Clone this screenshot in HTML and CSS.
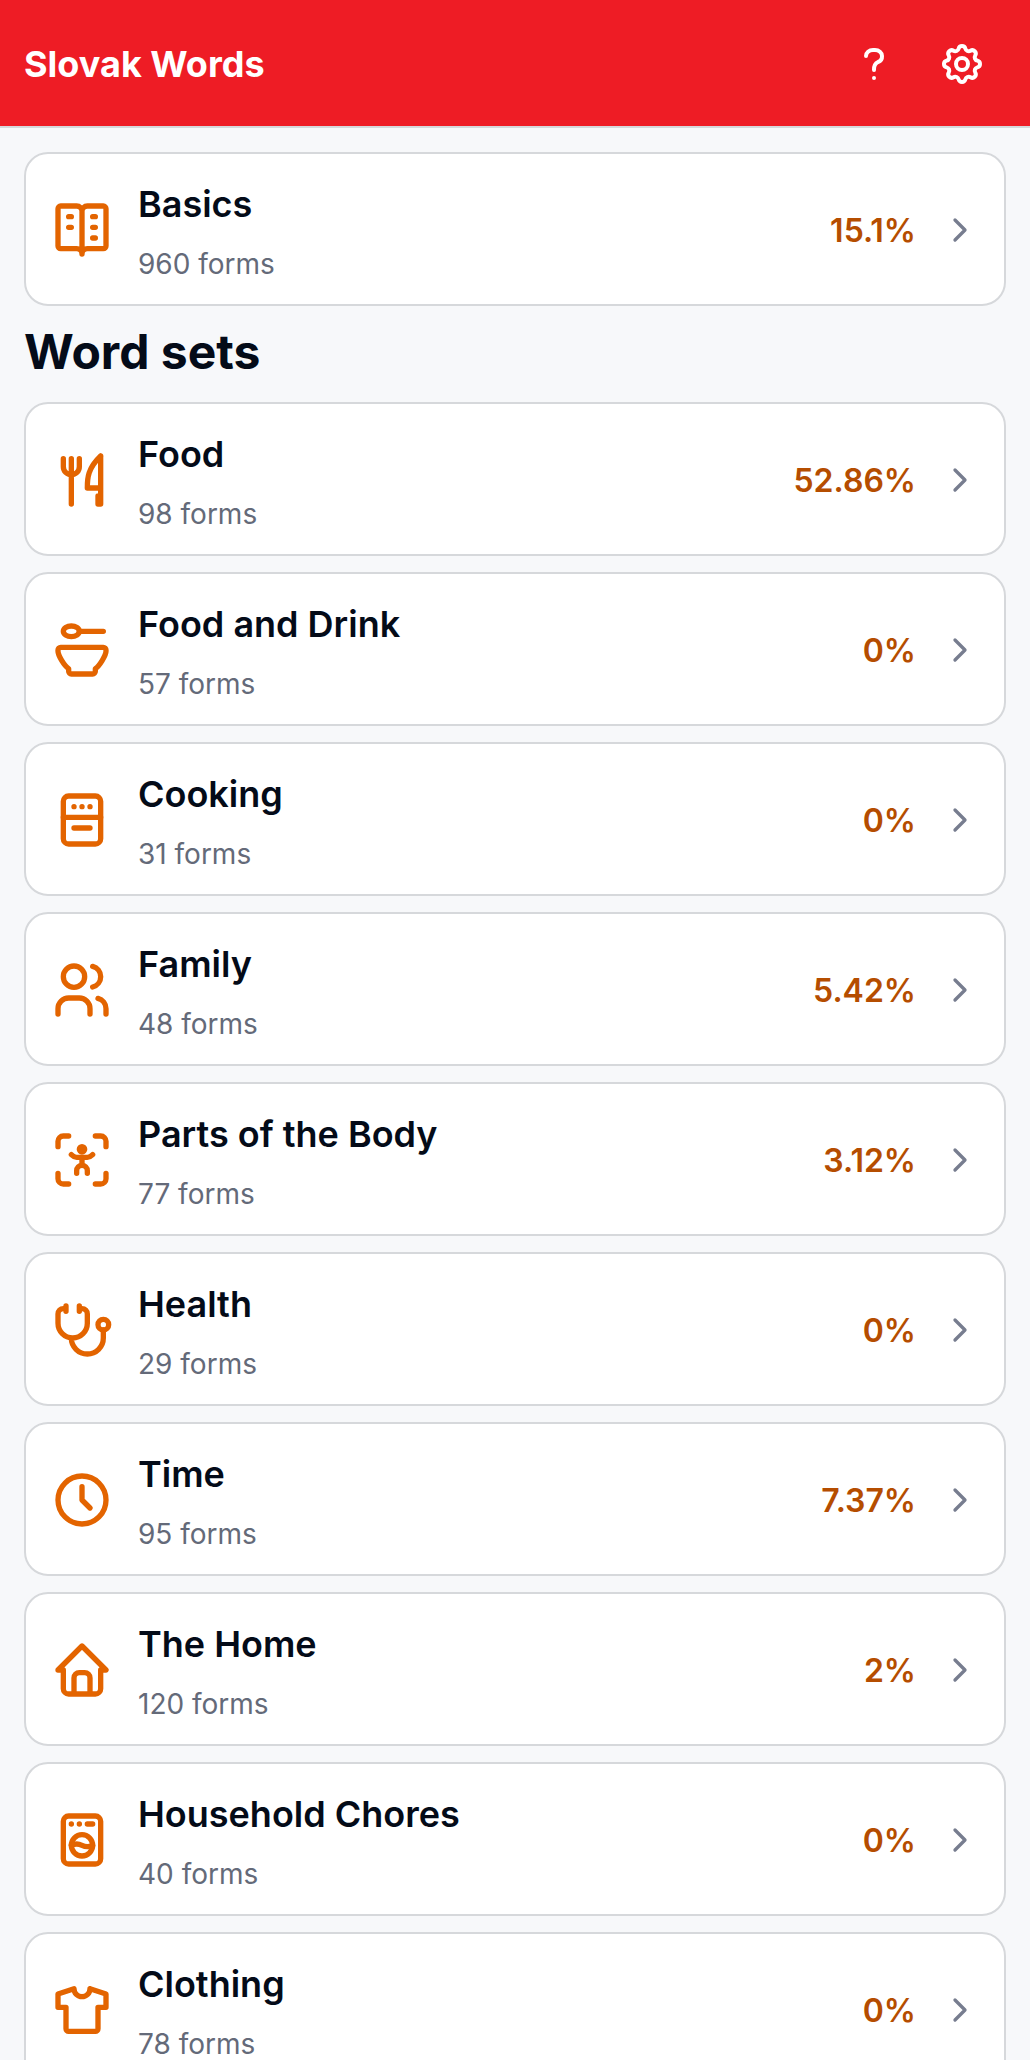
FILE: index.html
```html
<!DOCTYPE html>
<html lang="en">
<head>
  <meta charset="UTF-8">
  <meta name="viewport" content="width=device-width, initial-scale=1.0">
  <title>Slovak Words</title>
  <link rel="stylesheet" href="styles.css">
</head>
<body>
  <header class="topbar">
    <h1>Slovak Words</h1>
    <nav class="actions">
      <button type="button" aria-label="Help">
        <svg viewBox="0 0 24 24"><path d="M8 8a3.5 3 0 0 1 3.5-3h1a3.5 3 0 0 1 3.5 3a3 3 0 0 1-2 3a3 4 0 0 0-2 4M12 19v.01"/></svg>
      </button>
      <button type="button" aria-label="Settings">
        <svg viewBox="0 0 24 24"><path d="M10.325 4.317c.426-1.756 2.924-1.756 3.35 0a1.724 1.724 0 0 0 2.573 1.066c1.543-.94 3.31.826 2.37 2.37a1.724 1.724 0 0 0 1.065 2.572c1.756.426 1.756 2.924 0 3.35a1.724 1.724 0 0 0-1.066 2.573c.94 1.543-.826 3.31-2.37 2.37a1.724 1.724 0 0 0-2.572 1.065c-.426 1.756-2.924 1.756-3.35 0a1.724 1.724 0 0 0-2.573-1.066c-1.543.94-3.31-.826-2.37-2.37a1.724 1.724 0 0 0-1.065-2.572c-1.756-.426-1.756-2.924 0-3.35a1.724 1.724 0 0 0 1.066-2.573c-.94-1.543.826-3.31 2.37-2.37c1 .608 2.296.07 2.572-1.065z"/><circle cx="12" cy="12" r="3"/></svg>
      </button>
    </nav>
  </header>

  <main class="content">
    <a class="card" href="#basics">
      <svg class="icon" viewBox="0 0 24 24"><path d="M10 19H4a1 1 0 0 1-1-1V4a1 1 0 0 1 1-1h6a2 2 0 0 1 2 2a2 2 0 0 1 2-2h6a1 1 0 0 1 1 1v14a1 1 0 0 1-1 1h-6a2 2 0 0 0-2 2a2 2 0 0 0-2-2zM12 5v16M7 7h1M7 11h1M16 7h1M16 11h1M16 15h1"/></svg>
      <span class="info"><span class="name">Basics</span><span class="forms">960 forms</span></span>
      <span class="percent">15.1%</span>
      <svg class="chevron" viewBox="0 0 24 24"><path d="M9 6l6 6l-6 6"/></svg>
    </a>

    <h2>Word sets</h2>

    <a class="card" href="#food">
      <svg class="icon" viewBox="0 0 24 24"><path d="M19 3v12h-5c-.023-3.681.184-7.406 5-12m0 12v6h-1v-3M8 4v17M5 4v3a3 3 0 1 0 6 0V4"/></svg>
      <span class="info"><span class="name">Food</span><span class="forms">98 forms</span></span>
      <span class="percent">52.86%</span>
      <svg class="chevron" viewBox="0 0 24 24"><path d="M9 6l6 6l-6 6"/></svg>
    </a>

    <a class="card" href="#food-and-drink">
      <svg class="icon" viewBox="0 0 24 24"><path d="M4 11h16a1 1 0 0 1 1 1v.5c0 1.5-2.517 5.573-4 6.5v1a1 1 0 0 1-1 1H8a1 1 0 0 1-1-1v-1c-1.687-1.054-4-5-4-6.5V12a1 1 0 0 1 1-1zM11 5h9"/><ellipse cx="8" cy="5" rx="3" ry="2"/></svg>
      <span class="info"><span class="name">Food and Drink</span><span class="forms">57 forms</span></span>
      <span class="percent">0%</span>
      <svg class="chevron" viewBox="0 0 24 24"><path d="M9 6l6 6l-6 6"/></svg>
    </a>

    <a class="card" href="#cooking">
      <svg class="icon" viewBox="0 0 24 24"><rect x="5" y="3" width="14" height="18" rx="2"/><path d="M9 7h.01M12 7h.01M15 7h.01M5 11h14M9 15h6"/></svg>
      <span class="info"><span class="name">Cooking</span><span class="forms">31 forms</span></span>
      <span class="percent">0%</span>
      <svg class="chevron" viewBox="0 0 24 24"><path d="M9 6l6 6l-6 6"/></svg>
    </a>

    <a class="card" href="#family">
      <svg class="icon" viewBox="0 0 24 24"><circle cx="9" cy="7" r="4"/><path d="M3 21v-2a4 4 0 0 1 4-4h4a4 4 0 0 1 4 4v2M16 3.13a4 4 0 0 1 0 7.75M21 21v-2a4 4 0 0 0-3-3.85"/></svg>
      <span class="info"><span class="name">Family</span><span class="forms">48 forms</span></span>
      <span class="percent">5.42%</span>
      <svg class="chevron" viewBox="0 0 24 24"><path d="M9 6l6 6l-6 6"/></svg>
    </a>

    <a class="card" href="#body">
      <svg class="icon" viewBox="0 0 24 24"><path d="M3 7V5a2 2 0 0 1 2-2h2M3 17v2a2 2 0 0 0 2 2h2M17 3h2a2 2 0 0 1 2 2v2M17 21h2a2 2 0 0 0 2-2v-2M10 17v-1a2 2 0 1 1 4 0v1M8 10c.666.666 1.334 1 2 1h4c.666 0 1.334-.334 2-1M12 11v3"/><circle cx="12" cy="8" r="1"/></svg>
      <span class="info"><span class="name">Parts of the Body</span><span class="forms">77 forms</span></span>
      <span class="percent">3.12%</span>
      <svg class="chevron" viewBox="0 0 24 24"><path d="M9 6l6 6l-6 6"/></svg>
    </a>

    <a class="card" href="#health">
      <svg class="icon" viewBox="0 0 24 24"><path d="M6 4H5a2 2 0 0 0-2 2v3.5a5.5 5.5 0 0 0 11 0V6a2 2 0 0 0-2-2h-1M8 15a6 6 0 1 0 12 0v-3M11 3v2M6 3v2"/><circle cx="20" cy="10" r="2"/></svg>
      <span class="info"><span class="name">Health</span><span class="forms">29 forms</span></span>
      <span class="percent">0%</span>
      <svg class="chevron" viewBox="0 0 24 24"><path d="M9 6l6 6l-6 6"/></svg>
    </a>

    <a class="card" href="#time">
      <svg class="icon" viewBox="0 0 24 24"><circle cx="12" cy="12" r="9"/><path d="M12 7v5l3 3"/></svg>
      <span class="info"><span class="name">Time</span><span class="forms">95 forms</span></span>
      <span class="percent">7.37%</span>
      <svg class="chevron" viewBox="0 0 24 24"><path d="M9 6l6 6l-6 6"/></svg>
    </a>

    <a class="card" href="#home">
      <svg class="icon" viewBox="0 0 24 24"><path d="M5 12H3l9-9l9 9h-2M5 12v7a2 2 0 0 0 2 2h10a2 2 0 0 0 2-2v-7M9 21v-6a2 2 0 0 1 2-2h2a2 2 0 0 1 2 2v6"/></svg>
      <span class="info"><span class="name">The Home</span><span class="forms">120 forms</span></span>
      <span class="percent">2%</span>
      <svg class="chevron" viewBox="0 0 24 24"><path d="M9 6l6 6l-6 6"/></svg>
    </a>

    <a class="card" href="#chores">
      <svg class="icon" viewBox="0 0 24 24"><rect x="5" y="3" width="14" height="18" rx="2"/><circle cx="12" cy="14" r="4"/><path d="M8 6h.01M11 6h.01M14 6h2M8 14c1.333-.667 2.667-.667 4 0c1.333.667 2.667.667 4 0"/></svg>
      <span class="info"><span class="name">Household Chores</span><span class="forms">40 forms</span></span>
      <span class="percent">0%</span>
      <svg class="chevron" viewBox="0 0 24 24"><path d="M9 6l6 6l-6 6"/></svg>
    </a>

    <a class="card" href="#clothing">
      <svg class="icon" viewBox="0 0 24 24"><path d="M15 4l6 2v5h-3v8a1 1 0 0 1-1 1H7a1 1 0 0 1-1-1v-8H3V6l6-2a3 3 0 0 0 6 0"/></svg>
      <span class="info"><span class="name">Clothing</span><span class="forms">78 forms</span></span>
      <span class="percent">0%</span>
      <svg class="chevron" viewBox="0 0 24 24"><path d="M9 6l6 6l-6 6"/></svg>
    </a>
  </main>
</body>
</html>
```
FILE: styles.css
```css
* {
  box-sizing: border-box;
}
body {
  margin: 0;
  font-family: Inter, sans-serif;
  background-color: #f7f8fa;
  color: #040b18;
}
svg {
  flex-shrink: 0;
  fill: none;
  stroke: currentColor;
  stroke-width: 2;
  stroke-linecap: round;
  stroke-linejoin: round;
}
h1, h2 {
  margin: 0;
  font-weight: 700;
}
.topbar {
  display: flex;
  align-items: center;
  justify-content: space-between;
  padding: 20px 24px 18px;
  background-color: #ee1c25;
  border-bottom: 2px solid #d6d8db;
  color: white;
}
.topbar h1 {
  font-size: 36px;
  line-height: 54px;
}
.actions {
  display: flex;
}
.actions button {
  display: flex;
  align-items: center;
  justify-content: center;
  width: 88px;
  height: 88px;
  padding: 0;
  border: none;
  background: none;
  color: inherit;
  cursor: pointer;
}
.actions svg {
  width: 48px;
  height: 48px;
}
.content {
  display: flex;
  flex-direction: column;
  gap: 16px;
  padding: 24px;
}
.content h2 {
  margin-bottom: 4px;
  font-size: 48px;
  line-height: 60px;
}
.card {
  display: flex;
  align-items: center;
  gap: 24px;
  padding: 24px 24px 22px;
  background-color: white;
  border: 2px solid #d6d8db;
  border-radius: 24px;
  color: inherit;
  text-decoration: none;
}
.icon {
  width: 64px;
  height: 64px;
  color: #e36400;
}
.info {
  display: flex;
  flex-direction: column;
  flex-grow: 1;
  gap: 16px;
}
.name {
  font-size: 36px;
  font-weight: 600;
  line-height: 52px;
}
.forms {
  font-size: 28px;
  line-height: 36px;
  color: #646a79;
}
.percent {
  font-size: 32px;
  font-weight: 600;
  color: #b54d00;
}
.chevron {
  width: 40px;
  height: 40px;
  color: #777d8f;
}
```
